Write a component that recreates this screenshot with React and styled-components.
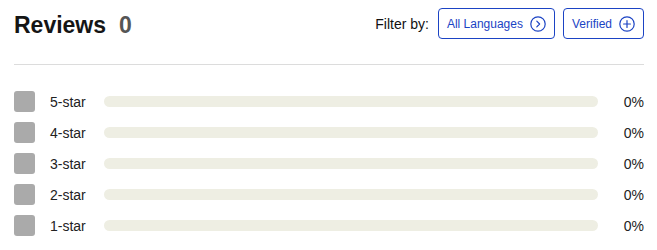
import React from "react";
import styled, { createGlobalStyle } from "styled-components";

const Global = createGlobalStyle`
  html, body { margin: 0; padding: 0; background: #fff; }
  body { font-family: "Liberation Sans", Arial, sans-serif; color: #111; }
`;

const Page = styled.div`
  padding: 8px 13px 0 14px;
`;

const Header = styled.div`
  display: flex;
  align-items: center;
  justify-content: space-between;
  height: 31px;
`;

const Title = styled.h2`
  margin: 4px 0 0 0;
  font-size: 23px;
  font-weight: 700;
  line-height: 31px;
  color: #151515;
  display: flex;
  align-items: baseline;
`;

const Count = styled.span`
  margin-left: 13px;
  color: #555;
`;

const Filters = styled.div`
  display: flex;
  align-items: center;
`;

const FilterLabel = styled.span`
  font-size: 14px;
  color: #111;
  margin-right: 9px;
`;

const FilterButton = styled.button`
  display: inline-flex;
  align-items: center;
  gap: 7px;
  height: 31px;
  box-sizing: border-box;
  padding: 0 8px;
  margin-left: ${(p) => (p.$first ? "0" : "8px")};
  border: 1px solid #1b43c4;
  border-radius: 4px;
  background: #fff;
  color: #1b43c4;
  font-family: inherit;
  font-size: 12px;
  cursor: pointer;
`;

const Divider = styled.hr`
  margin: 25px 0 0 0;
  border: none;
  border-top: 1px solid #dcdcdc;
  height: 0;
`;

const List = styled.div`
  margin-top: 21px;
  display: flex;
  flex-direction: column;
`;

const Row = styled.div`
  display: flex;
  align-items: center;
  height: 31px;
`;

const Check = styled.span`
  width: 21px;
  height: 21px;
  border-radius: 3px;
  background: #aaaaaa;
  margin-right: 15px;
  flex: none;
`;

const Label = styled.span`
  width: 54px;
  font-size: 14px;
  color: #222;
  flex: none;
`;

const Track = styled.div`
  flex: 1;
  height: 11px;
  border-radius: 6px;
  background: #eeeee3;
  overflow: hidden;
  margin-top: -1px;
`;

const Fill = styled.div`
  height: 100%;
  background: #1b43c4;
`;

const Percent = styled.span`
  width: 46px;
  text-align: right;
  font-size: 14px;
  color: #222;
  flex: none;
`;

const CircleIcon = ({ kind }) => (
  <svg width="16" height="16" viewBox="0 0 16 16" fill="none" stroke="currentColor" strokeWidth="1.2" strokeLinecap="round" strokeLinejoin="round">
    <circle cx="8" cy="8" r="7.2" />
    {kind === "chevron" ? (
      <path d="M6.8 5.2 L9.6 8 L6.8 10.8" />
    ) : (
      <path d="M8 4.6 V11.4 M4.6 8 H11.4" />
    )}
  </svg>
);

const rows = ["5-star", "4-star", "3-star", "2-star", "1-star"];

export default function App() {
  return (
    <Page>
      <Global />
      <Header>
        <Title>
          Reviews<Count>0</Count>
        </Title>
        <Filters>
          <FilterLabel>Filter by:</FilterLabel>
          <FilterButton $first>
            All Languages <CircleIcon kind="chevron" />
          </FilterButton>
          <FilterButton>
            Verified <CircleIcon kind="plus" />
          </FilterButton>
        </Filters>
      </Header>
      <Divider />
      <List>
        {rows.map((r) => (
          <Row key={r}>
            <Check />
            <Label>{r}</Label>
            <Track>
              <Fill style={{ width: "0%" }} />
            </Track>
            <Percent>0%</Percent>
          </Row>
        ))}
      </List>
    </Page>
  );
}
